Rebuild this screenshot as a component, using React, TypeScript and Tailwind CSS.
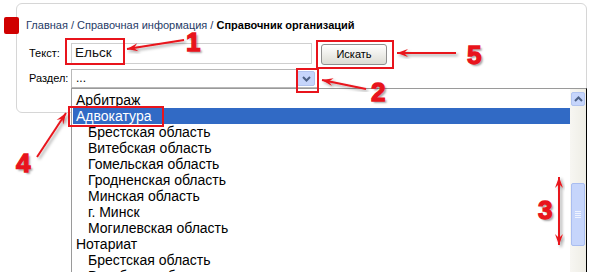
import React from "react";

const RED = "#e8141c";

type Item = { label: string; sub?: boolean; active?: boolean };

const items: Item[] = [
  { label: "Арбитраж" },
  { label: "Адвокатура", active: true },
  { label: "Брестская область", sub: true },
  { label: "Витебская область", sub: true },
  { label: "Гомельская область", sub: true },
  { label: "Гродненская область", sub: true },
  { label: "Минская область", sub: true },
  { label: "г. Минск", sub: true },
  { label: "Могилевская область", sub: true },
  { label: "Нотариат" },
  { label: "Брестская область", sub: true },
  { label: "Витебская область", sub: true },
];

const Chevron = ({ up }: { up?: boolean }) => (
  <svg width="9" height="6" viewBox="0 0 9 6">
    <path
      d={up ? "M1 5 L4.5 1.5 L8 5" : "M1 1 L4.5 4.5 L8 1"}
      fill="none"
      stroke="#4d6185"
      strokeWidth="2"
    />
  </svg>
);

// arrow line with a notched head at (x2, y2)
const head = (tx: number, ty: number, fx: number, fy: number) => {
  const a = Math.atan2(ty - fy, tx - fx);
  const c = Math.cos(a);
  const s = Math.sin(a);
  const L = 11;
  const W = 4;
  const bx = tx - L * c;
  const by = ty - L * s;
  const nx = tx - 7 * c;
  const ny = ty - 7 * s;
  return `${tx},${ty} ${bx - s * W},${by + c * W} ${nx},${ny} ${bx + s * W},${by - c * W}`;
};

const Arrow = ({
  x1,
  y1,
  x2,
  y2,
  both,
}: {
  x1: number;
  y1: number;
  x2: number;
  y2: number;
  both?: boolean;
}) => (
  <g filter="url(#sh)">
    <line x1={x1} y1={y1} x2={x2} y2={y2} stroke={RED} strokeWidth="2" />
    <polygon points={head(x2, y2, x1, y1)} fill={RED} />
    {both && <polygon points={head(x1, y1, x2, y2)} fill={RED} />}
  </g>
);

const Num = ({ n, className }: { n: string; className: string }) => (
  <span
    className={`absolute text-[26px] leading-[20px] font-bold text-[#e8141c] [-webkit-text-stroke:1.3px_#e8141c] [text-shadow:2px_2px_2px_rgba(0,0,0,0.35)] ${className}`}
  >
    {n}
  </span>
);

export default function App() {
  return (
    <div className="relative w-[591px] h-[272px] overflow-hidden bg-white font-['Liberation_Sans',Arial,sans-serif] text-black">
      {/* panel */}
      <div className="ml-[16px] mt-[3px] w-[571px] h-[110px] border border-[#d6d6d6] rounded-[6px] pl-[12px]">
        <div className="flex items-center mt-[13px] h-[17px]">
          <div className="-ml-[25px] w-[15px] h-[17px] bg-[#d00000] rounded-[2px]" />
          <div className="ml-[7px] text-[11px] text-[#1f3b66]">
            Главная / Справочная информация /{" "}
            <b className="text-black">Справочник организаций</b>
          </div>
        </div>

        <div className="flex items-center mt-[9px] h-[21px]">
          <div className="w-[42px] text-[11px]">Текст:</div>
          <div className="w-[241px] h-[21px] border border-[#cfcfcf] flex items-center pl-[3px] text-[13.5px] font-normal text-[#111]">
            Ельск
          </div>
          <button className="ml-[9px] mt-px w-[66px] h-[21px] rounded-[3px] border border-[#8f8f8f] bg-gradient-to-b from-white to-[#dcdcd4] text-[11px] text-black">
            Искать
          </button>
        </div>

        <div className="flex items-center mt-[5px] h-[19px]">
          <div className="w-[42px] text-[11px]">Раздел:</div>
          <div className="w-[247px] h-[19px] border border-[#b9b9b9] flex items-center justify-between pl-[4px] pr-[2px] text-[12px]">
            <span className="-mt-[2px]">...</span>
            <div className="w-[18px] h-[15px] bg-[#c6d5fb] border border-[#b2c4ef] rounded-[2px] flex items-center justify-center">
              <Chevron />
            </div>
          </div>
        </div>
      </div>

      {/* open list */}
      <div className="absolute left-[71px] top-[88px] w-[516px] h-[200px] border-t border-l border-[#9a9a9a] border-r border-r-black flex bg-white">
        <div className="flex-1 pt-[3px] pl-px">
          {items.map((it, i) => (
            <div
              key={i}
              className={`h-4 leading-4 text-[14px] whitespace-nowrap ${it.sub ? "pl-[15px]" : "pl-[3px]"} ${
                it.active ? "bg-[#316ac5] text-white" : ""
              }`}
            >
              {it.label}
            </div>
          ))}
        </div>
        <div className="w-[16px] bg-gradient-to-r from-[#f7f6f2] to-[#eeede5] pt-[3px] flex flex-col items-center">
          <div className="w-[14px] h-[14px] bg-[#c6d5fb] border border-[#b2c4ef] rounded-[2px] flex items-center justify-center">
            <Chevron up />
          </div>
          <div className="mt-[77px] w-[14px] h-[63px] bg-[#c6d5fb] border border-[#a9bdf0] rounded-[2px] flex flex-col items-center justify-center gap-[1px]">
            <div className="w-[6px] h-px bg-[#eef3ff]" />
            <div className="w-[6px] h-px bg-[#eef3ff]" />
            <div className="w-[6px] h-px bg-[#eef3ff]" />
            <div className="w-[6px] h-px bg-[#eef3ff]" />
          </div>
        </div>
      </div>

      {/* annotations */}
      <div className="absolute left-[65px] top-[38px] w-[60px] h-[27px] border-2 border-[#e8141c]" />
      <div className="absolute left-[316px] top-[40px] w-[78px] h-[29px] border-2 border-[#e8141c]" />
      <div className="absolute left-[296px] top-[68px] w-[23px] h-[25px] border-2 border-[#e8141c]" />
      <div className="absolute left-[68px] top-[106px] w-[96px] h-[21px] border-2 border-[#e8141c]" />

      <svg className="absolute inset-0 pointer-events-none" width="591" height="272">
        <defs>
          <filter id="sh" x="-20%" y="-20%" width="140%" height="140%">
            <feDropShadow dx="2" dy="2" stdDeviation="1.5" floodColor="#000" floodOpacity="0.35" />
          </filter>
        </defs>
        <Arrow x1={184} y1={40} x2={127} y2={49} />
        <Arrow x1={456} y1={53} x2={397} y2={53} />
        <Arrow x1={366} y1={89} x2={322} y2={80} />
        <Arrow x1={37} y1={157} x2={66} y2={113} />
        <Arrow x1={559} y1={177} x2={559} y2={245} both />
      </svg>

      <Num n="1" className="left-[186px] top-[32px]" />
      <Num n="5" className="left-[467px] top-[45px]" />
      <Num n="2" className="left-[371px] top-[82px]" />
      <Num n="4" className="left-[16px] top-[153px]" />
      <Num n="3" className="left-[538px] top-[200px]" />
    </div>
  );
}
